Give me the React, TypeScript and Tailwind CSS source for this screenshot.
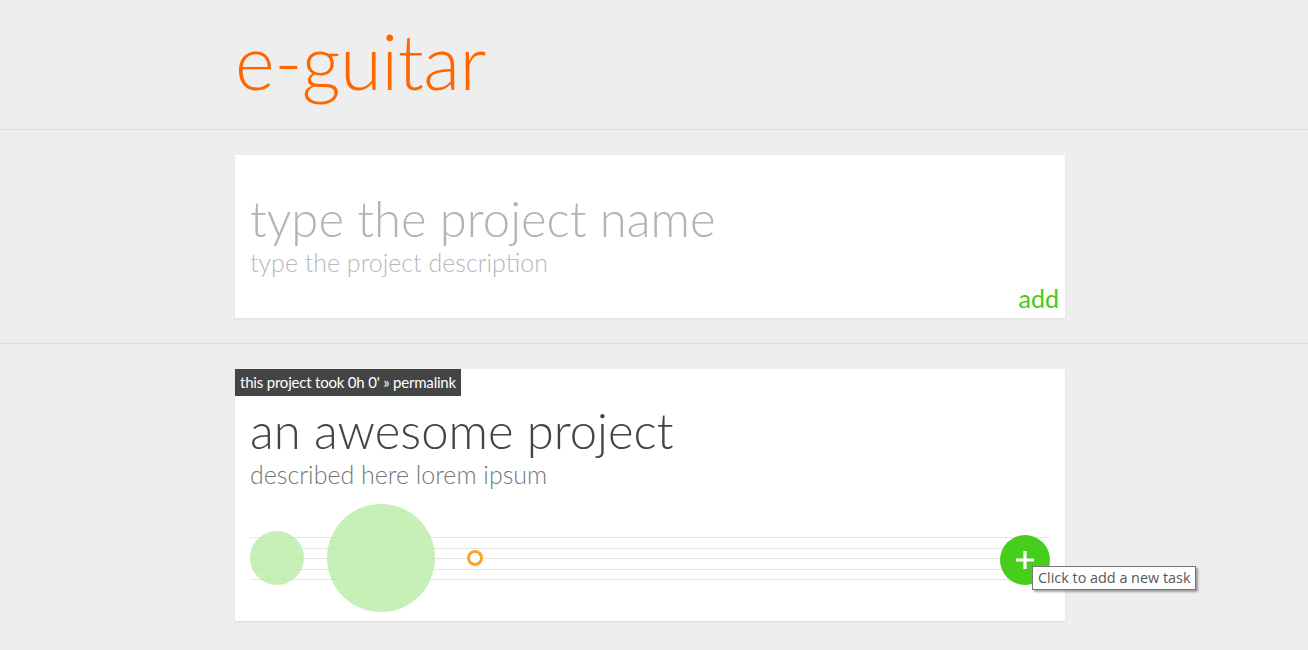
import React from "react";

const LINES = [0, 1, 2, 3, 4];

const BUBBLES = [
  { x: 27, size: 54, kind: "done" },
  { x: 131, size: 108, kind: "done" },
  { x: 225, size: 16, kind: "running" },
];

function Timeline() {
  return (
    <div className="relative h-[120px] mt-[11px]">
      {/* guide lines */}
      <div className="absolute left-0 right-0 top-[37px] flex flex-col gap-[9.5px]">
        {LINES.map((i) => (
          <div key={i} className="h-px bg-[#e6e6e6]" />
        ))}
      </div>

      {BUBBLES.map((b, i) =>
        b.kind === "done" ? (
          <div
            key={i}
            className="absolute rounded-full bg-[#b4eba0]/75"
            style={{ left: b.x - b.size / 2, top: 58 - b.size / 2, width: b.size, height: b.size }}
          />
        ) : (
          <div
            key={i}
            className="absolute rounded-full border-[3px] border-[#f7a52b] bg-white"
            style={{ left: b.x - b.size / 2, top: 58 - b.size / 2, width: b.size, height: b.size }}
          />
        )
      )}

      {/* add task */}
      <button className="absolute right-0 top-[35px] w-[50px] h-[50px] rounded-full bg-[#47cd1b] flex items-center justify-center">
        <svg width="22" height="22" viewBox="0 0 22 22">
          <path d="M11 2v18M2 11h18" stroke="#fff" strokeWidth="3.2" />
        </svg>
      </button>

      {/* tooltip */}
      <div
        className="absolute left-[782px] top-[66px] h-[24px] px-[5px] flex items-center whitespace-nowrap bg-white border border-[#767676] text-[14.4px] text-[#575757] shadow-[2px_2px_2px_rgba(0,0,0,0.35)]"
        style={{ fontFamily: '"Open Sans", "Noto Sans", sans-serif' }}
      >
        Click to add a new task
      </div>
    </div>
  );
}

export default function App() {
  return (
    <div
      className="min-h-screen bg-[#eeeeee] text-[#444]"
      style={{ fontFamily: "Lato, 'Open Sans', sans-serif" }}
    >
      {/* Header */}
      <header className="h-[130px] border-b border-[#dcdcdc]">
        <div className="w-[830px] ml-[235px]">
          <h1 className="pt-[16px] text-[76px] leading-[90px] font-light text-[#ff6600] tracking-[-0.5px]">
            e-guitar
          </h1>
        </div>
      </header>

      {/* New project form */}
      <section className="py-[25px] border-b border-[#dcdcdc]">
        <div className="w-[830px] ml-[235px] h-[163px] bg-white shadow-[0_1px_2px_rgba(0,0,0,0.08)] px-[15px] pt-[35px] flex flex-col">
          <div className="text-[49px] leading-[57px] font-light text-[#b3b3b3]">
            type the project name
          </div>
          <div className="text-[25px] leading-[30px] font-light text-[#b8b8b8]">
            type the project description
          </div>
          <div className="mt-auto mb-[6px] self-end -mr-[9px] text-[25px] leading-[28px] text-[#44cc11]">
            add
          </div>
        </div>
      </section>

      {/* Project list */}
      <section className="pt-[25px] pb-[30px]">
        <div className="w-[830px] ml-[235px] bg-white shadow-[0_1px_2px_rgba(0,0,0,0.08)] pb-px">
          <div className="inline-block bg-[#444444] text-white text-[15px] leading-[27px] px-[5px] tracking-[-0.2px]">
            this project took 0h 0' » permalink
          </div>
          <div className="px-[15px]">
            <div className="text-[49px] leading-[57px] font-light text-[#444444] mt-[6px]">
              an awesome project
            </div>
            <div className="text-[25px] leading-[30px] font-light text-[#777777]">
              described here lorem ipsum
            </div>
            <Timeline />
          </div>
        </div>
      </section>
    </div>
  );
}
